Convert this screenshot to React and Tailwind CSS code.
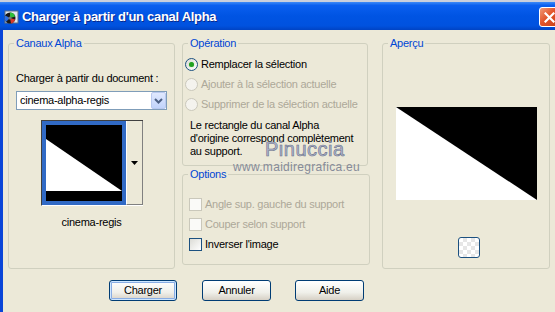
import { useState } from "react";

function Radio({ checked, disabled }) {
  return (
    <span
      className={`w-[13px] h-[13px] rounded-full border flex items-center justify-center shrink-0 ${
        disabled ? "border-[#cac8bb] bg-[#f4f3ee]" : "border-[#1c5180] bg-[linear-gradient(135deg,#dcdcd6,#ffffff)]"
      }`}
    >
      {checked && <span className="w-[5px] h-[5px] rounded-full bg-[#21a121] shadow-[0_0_1px_#7fd27f]" />}
    </span>
  );
}

function Check({ disabled }) {
  return (
    <span
      className={`w-[13px] h-[13px] border shrink-0 ${
        disabled ? "border-[#cac8bb] bg-[#fafaf8]" : "border-[#1c5180] bg-[linear-gradient(135deg,#dcdcd6,#ffffff)]"
      }`}
    />
  );
}

function Group({ label, className, children }) {
  return (
    <fieldset className={`border border-[#d0d0bf] rounded-[3px] m-0 p-0 min-w-0 ${className}`}>
      <legend className="ml-[5px] px-[2px] text-[#0046d5] leading-[13px]">{label}</legend>
      {children}
    </fieldset>
  );
}

function XpButton({ children, primary, className }) {
  return (
    <button
      className={`h-[21px] rounded-[3px] border border-[#003c74] bg-[linear-gradient(to_bottom,#ffffff,#f0f0ea_60%,#d6d0c5)] leading-none ${
        primary ? "shadow-[inset_0_0_0_1px_#cee7ff,inset_0_0_0_2px_#89ade4]" : ""
      } ${className}`}
    >
      {children}
    </button>
  );
}

export default function App() {
  const [invert, setInvert] = useState(false);

  return (
    <div className="w-[555px] h-[312px] overflow-hidden bg-[#ece9d8] flex flex-col font-['Liberation_Sans',Arial,sans-serif] text-[11px] tracking-[-0.25px] text-black relative">
      <div className="h-[2px] bg-[#c9cfdc]" />
      {/* title bar */}
      <div className="h-[28px] flex items-center bg-[linear-gradient(to_bottom,#3d8af7_0%,#0a5fef_12%,#0054e3_50%,#0052df_85%,#0043c4_100%)]">
        <svg width="16" height="16" viewBox="0 0 16 16" className="ml-[3px] mt-[2px]">
          <rect x="2" y="2" width="13" height="12" fill="#dfe6ee" stroke="#5d6c80" />
          <circle cx="7" cy="9" r="5.5" fill="#1a1a1a" />
          <path d="M7 9 L7 3.5 A5.5 5.5 0 0 1 12.2 7.5 Z" fill="#2fbf3a" />
          <path d="M7 9 L12.2 10.5 A5.5 5.5 0 0 1 8 14.4 Z" fill="#d83a2a" />
          <path d="M7 9 L3 12.8 A5.5 5.5 0 0 1 2.2 6.5 Z" fill="#2f6fe0" />
          <circle cx="7" cy="9" r="1.6" fill="#777" />
        </svg>
        <span className="ml-[3px] mt-[1px] text-white font-bold text-[13px] tracking-[-0.3px] [text-shadow:1px_1px_0_#0a2a8c]">
          Charger à partir d'un canal Alpha
        </span>
        <div className="ml-auto self-start mt-[5px] -mr-[5px] w-[21px] h-[20px] rounded-[3px] border border-white bg-[linear-gradient(135deg,#f09a78,#e2542a_45%,#c53f17)] flex items-center justify-center">
          <svg width="11" height="11" viewBox="0 0 11 11">
            <path d="M1.5 1.5 L9.5 9.5 M9.5 1.5 L1.5 9.5" stroke="#fff" strokeWidth="2.2" strokeLinecap="square" />
          </svg>
        </div>
      </div>

      {/* body */}
      <div className="flex-1 flex flex-col border-l-[3px] border-[#0a45d8] pl-[5px] pt-[7px]">
        <div className="flex items-start">
          {/* Canaux Alpha */}
          <Group label="Canaux Alpha" className="w-[167px] h-[232px]">
            <div className="flex flex-col">
              <div className="mt-[22px] ml-[7px] leading-[13px]">Charger à partir du document :</div>
              <div className="mt-[6px] ml-[7px] w-[151px] h-[19px] border border-[#7f9db9] bg-white flex items-center">
                <span className="pl-[3px] flex-1">cinema-alpha-regis</span>
                <span className="w-[15px] h-[17px] rounded-[2px] border border-[#b9c9ef] bg-[linear-gradient(to_bottom,#e0e9fe,#c1d3fb)] flex items-center justify-center">
                  <svg width="9" height="6" viewBox="0 0 9 6">
                    <path d="M1 1 L4.5 4.5 L8 1" fill="none" stroke="#4d6185" strokeWidth="2" />
                  </svg>
                </span>
              </div>
              <div className="mt-[10px] ml-[32px] w-[102px] h-[86px] flex border-t border-l border-[#404040] border-b border-b-white">
                <div className="w-[84px] h-[84px] border-[4px] border-[#316ac5] bg-black">
                  <svg width="76" height="76" viewBox="0 0 76 76" className="block">
                    <polygon points="0,14 76,66 0,66" fill="#fff" />
                  </svg>
                </div>
                <div className="flex-1 border-l border-white border-r border-r-[#808080] border-b border-b-[#808080] bg-[#ece9d8] flex items-center justify-center">
                  <svg width="7" height="4" viewBox="0 0 7 4">
                    <polygon points="0,0 7,0 3.5,4" fill="#000" />
                  </svg>
                </div>
              </div>
              <div className="mt-[10px] text-center leading-[13px]">cinema-regis</div>
            </div>
          </Group>

          {/* middle column */}
          <div className="ml-[7px] w-[188px] flex flex-col">
            <Group label="Opération" className="w-[186px] h-[129px]">
              <div className="mt-[4px] pl-[2px] flex flex-col">
                <label className="h-[20px] flex items-center gap-[3px]">
                  <Radio checked />
                  <span>Remplacer la sélection</span>
                </label>
                <label className="h-[20px] flex items-center gap-[3px] text-[#aca899]">
                  <Radio disabled />
                  <span>Ajouter à la sélection actuelle</span>
                </label>
                <label className="h-[20px] flex items-center gap-[3px] text-[#aca899]">
                  <Radio disabled />
                  <span>Supprimer de la sélection actuelle</span>
                </label>
              </div>
              <p className="mt-[5px] pl-[7px] leading-[13px]">
                Le rectangle du canal Alpha
                <br />
                d'origine correspond complètement
                <br />
                au support.
              </p>
            </Group>
            <Group label="Options" className="mt-[2px] w-[188px] h-[97px]">
              <div className="mt-[13px] pl-[6px] flex flex-col">
                <div className="h-[20px] flex items-center gap-[3px] text-[#aca899]">
                  <Check disabled />
                  <span>Angle sup. gauche du support</span>
                </div>
                <div className="h-[20px] flex items-center gap-[3px] text-[#aca899]">
                  <Check disabled />
                  <span>Couper selon support</span>
                </div>
                <div className="h-[20px] flex items-center gap-[3px]" onClick={() => setInvert(!invert)}>
                  <Check />
                  <span>Inverser l'image</span>
                </div>
              </div>
            </Group>
          </div>

          {/* Aperçu */}
          <Group label="Aperçu" className="ml-[12px] w-[168px] h-[232px]">
            <div className="flex flex-col items-start">
              <div className="mt-[57px] ml-[13px] w-[141px] h-[93px] bg-white">
                <svg width="141" height="93" viewBox="0 0 141 93" className="block">
                  <polygon points="0,0 141,0 141,93" fill="#000" />
                </svg>
              </div>
              <div className="mt-[37px] ml-[75px] w-[22px] h-[21px] rounded-[3px] border border-[#1c5180] bg-[repeating-conic-gradient(#e6e6e6_0%_25%,#ffffff_0%_50%)] bg-[length:8px_8px]" />
            </div>
          </Group>
        </div>

        {/* buttons */}
        <div className="mt-[11px] flex">
          <XpButton primary className="ml-[101px] w-[68px]">Charger</XpButton>
          <XpButton className="ml-[25px] w-[69px]">Annuler</XpButton>
          <XpButton className="ml-[24px] w-[69px]">Aide</XpButton>
        </div>
      </div>

      {/* watermark */}
      <span className="absolute left-[265px] top-[138px] text-[20px] leading-[22px] tracking-[0.5px] text-[#b1b8d0] [-webkit-text-stroke:0.6px_#6a7088] pointer-events-none">
        Pinuccia
      </span>
      <span className="absolute left-[233px] top-[160px] text-[12px] leading-[14px] tracking-[0.3px] text-[#868b98] pointer-events-none">
        www.maidiregrafica.eu
      </span>
    </div>
  );
}
